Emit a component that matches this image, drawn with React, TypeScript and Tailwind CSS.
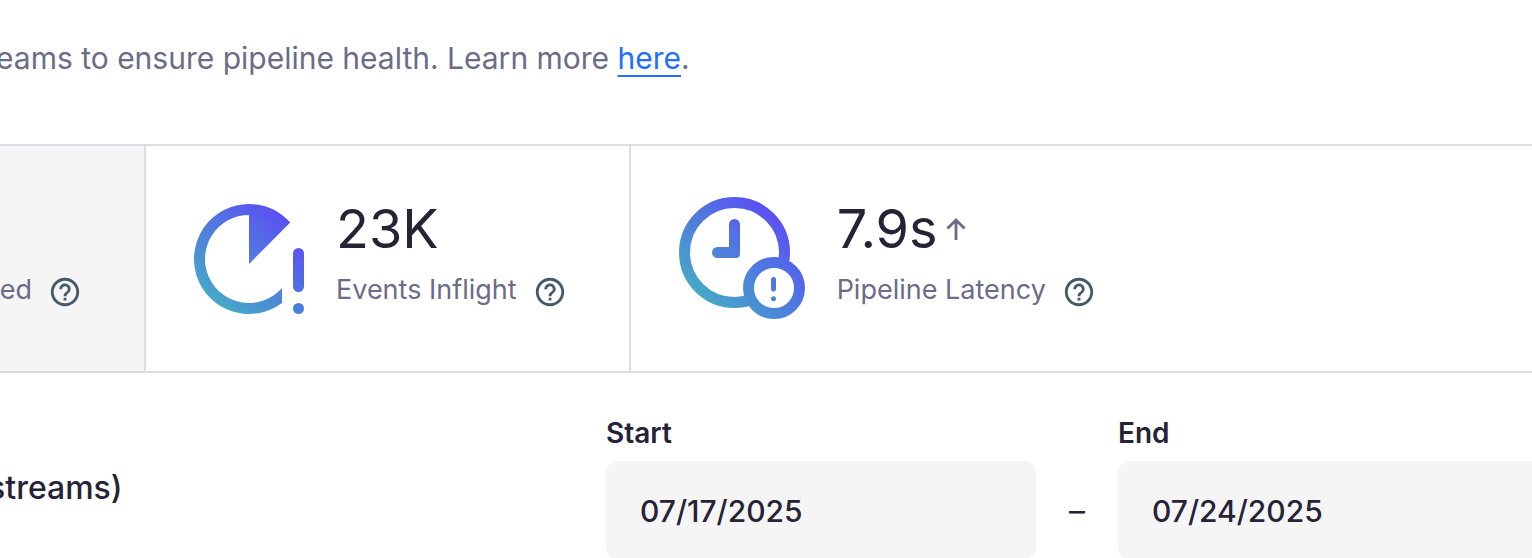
import React, { useState } from "react";
import { MdHelpOutline } from "react-icons/md";

// ─── Icons ─────────────────────────────────────────────────────────

function InflightIcon() {
  return (
    <svg width="110" height="110" viewBox="0 0 110 110" className="shrink-0" aria-hidden="true">
      <defs>
        <linearGradient id="inflight-ring" gradientUnits="userSpaceOnUse" x1="20" y1="98" x2="88" y2="10">
          <stop offset="0" stopColor="#46a8c8" />
          <stop offset="1" stopColor="#5b50f2" />
        </linearGradient>
        <linearGradient id="inflight-mark" gradientUnits="userSpaceOnUse" x1="104" y1="44" x2="104" y2="110">
          <stop offset="0" stopColor="#5a55f0" />
          <stop offset="1" stopColor="#4883da" />
        </linearGradient>
      </defs>
      <path
        fill="url(#inflight-ring)"
        d="M55 0A55 55 0 0 1 96.2 18.6L55 60V11A44 44 0 1 0 88 84.1V99A55 55 0 1 1 55 0Z"
      />
      <rect x="99" y="44" width="11" height="44" rx="5.5" fill="url(#inflight-mark)" />
      <circle cx="104.5" cy="104.5" r="5.5" fill="url(#inflight-mark)" />
    </svg>
  );
}

function LatencyIcon() {
  return (
    <svg width="126" height="124" viewBox="0 0 126 124" className="shrink-0" aria-hidden="true">
      <defs>
        <linearGradient id="latency-clock" gradientUnits="userSpaceOnUse" x1="20" y1="98" x2="92" y2="16">
          <stop offset="0" stopColor="#46a8c8" />
          <stop offset="1" stopColor="#5b50f2" />
        </linearGradient>
        <linearGradient id="latency-badge" gradientUnits="userSpaceOnUse" x1="70" y1="112" x2="118" y2="70">
          <stop offset="0" stopColor="#4696d2" />
          <stop offset="1" stopColor="#5463ec" />
        </linearGradient>
      </defs>
      <circle cx="55.5" cy="55.5" r="50" fill="none" stroke="url(#latency-clock)" strokeWidth="11" />
      <path
        fill="url(#latency-clock)"
        d="M55.5 22A5.5 5.5 0 0 1 61 27.5V57A4 4 0 0 1 57 61H38.5A5.5 5.5 0 0 1 38.5 50H50V27.5A5.5 5.5 0 0 1 55.5 22Z"
      />
      <circle cx="95" cy="91" r="25.5" fill="#fff" stroke="url(#latency-badge)" strokeWidth="11" />
      <rect x="92" y="80" width="5" height="14.5" rx="2.5" fill="url(#latency-badge)" />
      <circle cx="94.5" cy="101.7" r="2.5" fill="url(#latency-badge)" />
    </svg>
  );
}

function TrendUpIcon() {
  return (
    <svg width="20" height="24" viewBox="0 0 20 24" fill="none" stroke="#6b6b86" strokeWidth="2.8" className="shrink-0" role="img" aria-label="Trending up">
      <path d="M10 23V3M1.5 11.5L10 3L18.5 11.5" />
    </svg>
  );
}

// ─── Building blocks ───────────────────────────────────────────────

function Caption({ label, help }: { label: string; help: string }) {
  return (
    <div className="flex h-10 items-end gap-4">
      <span className="whitespace-nowrap text-[27px] leading-[38px] text-[#6b6c87]">{label}</span>
      <button type="button" aria-label={help} className="text-[#455a68]">
        <MdHelpOutline size={34} />
      </button>
    </div>
  );
}

interface MetricProps {
  icon: React.ReactNode;
  value: string;
  trend?: React.ReactNode;
  label: string;
  help: string;
}

function Metric({ icon, value, trend, label, help }: MetricProps) {
  return (
    <div className="flex items-center gap-8">
      {icon}
      <div className="flex flex-col gap-2 pb-3">
        <div className="flex items-center gap-2">
          <span className="text-[54px] leading-[64px] text-[#272336]">{value}</span>
          {trend}
        </div>
        <Caption label={label} help={help} />
      </div>
    </div>
  );
}

interface DateFieldProps {
  id: string;
  label: string;
  value: string;
  onChange: (value: string) => void;
}

function DateField({ id, label, value, onChange }: DateFieldProps) {
  return (
    <div className="flex w-[430px] shrink-0 flex-col gap-2">
      <label htmlFor={id} className="text-[28px] leading-10 font-semibold">{label}</label>
      <input
        id={id}
        type="text"
        value={value}
        onChange={(e) => onChange(e.target.value)}
        className="h-[98px] w-full rounded-xl bg-[#f5f5f5] px-[34px] pt-0.5 text-[30px] font-medium focus:outline-none"
      />
    </div>
  );
}

// ─── Main Page ─────────────────────────────────────────────────────

export default function App() {
  const [start, setStart] = useState("07/17/2025");
  const [end, setEnd] = useState("07/24/2025");

  return (
    <div className="h-screen overflow-hidden bg-white font-['Inter',sans-serif] text-[#272336]">
      {/* ── Intro ── */}
      <p className="-ml-1 pt-[38px] pb-[66px] text-[30px] leading-10 whitespace-nowrap text-[#6b6c87]">
        eams to ensure pipeline health. Learn more{" "}
        <a href="#learn-more" className="text-[#216fff] underline decoration-2 underline-offset-[6px]">here</a>.
      </p>

      {/* ── Metrics ── */}
      <div className="flex border-y-2 border-[#dcdce4]">
        <div className="flex w-[146px] shrink-0 items-end justify-end border-r-2 border-[#dcdce4] bg-[#f5f5f5] pr-[62px] pb-[62px]">
          <Caption label="sed" help="About processed events" />
        </div>
        <div className="shrink-0 border-r-2 border-[#dcdce4] pt-[51px] pr-[62px] pb-[50px] pl-12">
          <Metric icon={<InflightIcon />} value="23K" label="Events Inflight" help="About events inflight" />
        </div>
        <div className="flex-1 pt-[51px] pb-[50px] pl-12">
          <Metric icon={<LatencyIcon />} value="7.9s" trend={<TrendUpIcon />} label="Pipeline Latency" help="About pipeline latency" />
        </div>
      </div>

      {/* ── Date range ── */}
      <div className="flex pt-10">
        <h2 className="-ml-3 w-[618px] shrink-0 pt-[55px] text-[32px] leading-10 font-medium">streams)</h2>
        <div className="flex items-end">
          <DateField id="start" label="Start" value={start} onChange={setStart} />
          <span className="flex h-[98px] w-[82px] shrink-0 items-center justify-center pt-0.5 text-[32px]">–</span>
          <DateField id="end" label="End" value={end} onChange={setEnd} />
        </div>
      </div>
    </div>
  );
}
